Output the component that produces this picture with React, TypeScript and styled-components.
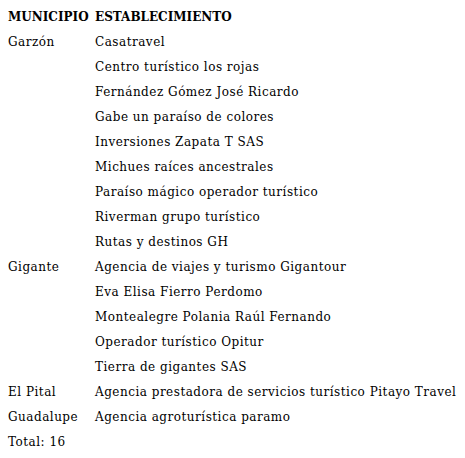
import styled, { createGlobalStyle } from 'styled-components';

const GlobalStyle = createGlobalStyle`
  body {
    margin: 0;
    background: #ffffff;
    color: #000000;
    font-family: "DejaVu Serif", "Liberation Serif", serif;
  }
`;

const Wrapper = styled.div`
  padding: 4px 0 0 8px;
`;

const Table = styled.table`
  border-collapse: collapse;
  font-size: 12px;
`;

const HeadCell = styled.th`
  text-align: left;
  font-weight: bold;
  height: 25px;
  padding: 0;
  vertical-align: middle;
  white-space: nowrap;
`;

const Cell = styled.td<{ $first?: boolean }>`
  height: 25px;
  padding: 0;
  width: ${(p) => (p.$first ? '87px' : 'auto')};
  letter-spacing: 0.5px;
  vertical-align: middle;
  white-space: nowrap;
`;

const data: [string, string[]][] = [
  [
    'Garzón',
    [
      'Casatravel',
      'Centro turístico los rojas',
      'Fernández Gómez José Ricardo',
      'Gabe un paraíso de colores',
      'Inversiones Zapata T SAS',
      'Michues raíces ancestrales',
      'Paraíso mágico operador turístico',
      'Riverman grupo turístico',
      'Rutas y destinos GH',
    ],
  ],
  [
    'Gigante',
    [
      'Agencia de viajes y turismo Gigantour',
      'Eva Elisa Fierro Perdomo',
      'Montealegre Polania Raúl Fernando',
      'Operador turístico Opitur',
      'Tierra de gigantes SAS',
    ],
  ],
  ['El Pital', ['Agencia prestadora de servicios turístico Pitayo Travel']],
  ['Guadalupe', ['Agencia agroturística paramo']],
];

export default function App() {
  const total = data.reduce((n, [, list]) => n + list.length, 0);
  return (
    <Wrapper>
      <GlobalStyle />
      <Table>
        <thead>
          <tr>
            <HeadCell>MUNICIPIO</HeadCell>
            <HeadCell>ESTABLECIMIENTO</HeadCell>
          </tr>
        </thead>
        <tbody>
          {data.flatMap(([town, list]) =>
            list.map((name, i) => (
              <tr key={town + name}>
                <Cell $first>{i === 0 ? town : ''}</Cell>
                <Cell>{name}</Cell>
              </tr>
            ))
          )}
          <tr>
            <Cell $first>Total: {total}</Cell>
            <Cell />
          </tr>
        </tbody>
      </Table>
    </Wrapper>
  );
}
